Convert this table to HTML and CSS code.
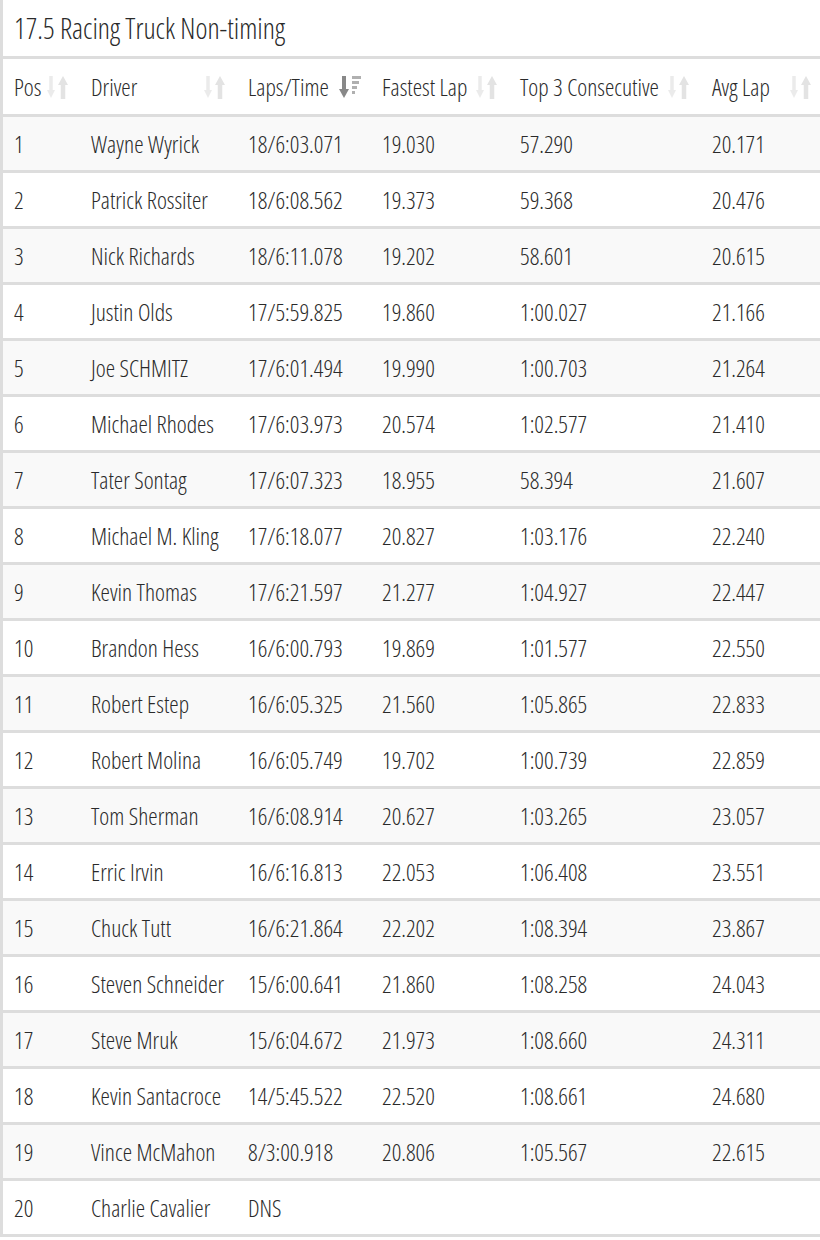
FILE: index.html
```html
<!DOCTYPE html>
<html>
<head>
<meta charset="utf-8">
<link rel="stylesheet" href="styles.css">
</head>
<body>
<div class="panel">
  <div class="panel-title">17.5 Racing Truck Non-timing</div>
  <table class="results">
    <colgroup>
      <col class="c-pos"><col class="c-driver"><col class="c-laps"><col class="c-fast"><col class="c-top3"><col class="c-avg">
    </colgroup>
    <thead>
      <tr>
        <th>Pos<span class="sort"><svg viewBox="0 0 22 24" width="22" height="24"><path class="a1" d="M4 1v16"/><path class="h1" d="M0 15h8l-4 8z"/><path class="a2" d="M16 8v16"/><path class="h2" d="M11 10h10l-5-9z"/></svg></span></th>
        <th>Driver<span class="sort"><svg viewBox="0 0 22 24" width="22" height="24"><path class="a1" d="M4 1v16"/><path class="h1" d="M0 15h8l-4 8z"/><path class="a2" d="M16 8v16"/><path class="h2" d="M11 10h10l-5-9z"/></svg></span></th>
        <th>Laps/Time<span class="sort active"><svg viewBox="0 0 22 24" width="22" height="24"><path class="ad" d="M5 1v16"/><path class="hd" d="M0 14h10l-5 9z"/><rect class="bar" x="13" y="1" width="9" height="3"/><rect class="bar" x="13" y="6" width="7" height="3"/><rect class="bar" x="13" y="11" width="5" height="3"/><rect class="bar" x="13" y="16" width="3" height="3"/></svg></span></th>
        <th>Fastest Lap<span class="sort"><svg viewBox="0 0 22 24" width="22" height="24"><path class="a1" d="M4 1v16"/><path class="h1" d="M0 15h8l-4 8z"/><path class="a2" d="M16 8v16"/><path class="h2" d="M11 10h10l-5-9z"/></svg></span></th>
        <th>Top 3 Consecutive<span class="sort"><svg viewBox="0 0 22 24" width="22" height="24"><path class="a1" d="M4 1v16"/><path class="h1" d="M0 15h8l-4 8z"/><path class="a2" d="M16 8v16"/><path class="h2" d="M11 10h10l-5-9z"/></svg></span></th>
        <th>Avg Lap<span class="sort"><svg viewBox="0 0 22 24" width="22" height="24"><path class="a1" d="M4 1v16"/><path class="h1" d="M0 15h8l-4 8z"/><path class="a2" d="M16 8v16"/><path class="h2" d="M11 10h10l-5-9z"/></svg></span></th>
      </tr>
    </thead>
    <tbody>
      <tr><td>1</td><td>Wayne Wyrick</td><td>18/6:03.071</td><td>19.030</td><td>57.290</td><td>20.171</td></tr>
      <tr><td>2</td><td>Patrick Rossiter</td><td>18/6:08.562</td><td>19.373</td><td>59.368</td><td>20.476</td></tr>
      <tr><td>3</td><td>Nick Richards</td><td>18/6:11.078</td><td>19.202</td><td>58.601</td><td>20.615</td></tr>
      <tr><td>4</td><td>Justin Olds</td><td>17/5:59.825</td><td>19.860</td><td>1:00.027</td><td>21.166</td></tr>
      <tr><td>5</td><td>Joe SCHMITZ</td><td>17/6:01.494</td><td>19.990</td><td>1:00.703</td><td>21.264</td></tr>
      <tr><td>6</td><td>Michael Rhodes</td><td>17/6:03.973</td><td>20.574</td><td>1:02.577</td><td>21.410</td></tr>
      <tr><td>7</td><td>Tater Sontag</td><td>17/6:07.323</td><td>18.955</td><td>58.394</td><td>21.607</td></tr>
      <tr><td>8</td><td>Michael M. Kling</td><td>17/6:18.077</td><td>20.827</td><td>1:03.176</td><td>22.240</td></tr>
      <tr><td>9</td><td>Kevin Thomas</td><td>17/6:21.597</td><td>21.277</td><td>1:04.927</td><td>22.447</td></tr>
      <tr><td>10</td><td>Brandon Hess</td><td>16/6:00.793</td><td>19.869</td><td>1:01.577</td><td>22.550</td></tr>
      <tr><td>11</td><td>Robert Estep</td><td>16/6:05.325</td><td>21.560</td><td>1:05.865</td><td>22.833</td></tr>
      <tr><td>12</td><td>Robert Molina</td><td>16/6:05.749</td><td>19.702</td><td>1:00.739</td><td>22.859</td></tr>
      <tr><td>13</td><td>Tom Sherman</td><td>16/6:08.914</td><td>20.627</td><td>1:03.265</td><td>23.057</td></tr>
      <tr><td>14</td><td>Erric Irvin</td><td>16/6:16.813</td><td>22.053</td><td>1:06.408</td><td>23.551</td></tr>
      <tr><td>15</td><td>Chuck Tutt</td><td>16/6:21.864</td><td>22.202</td><td>1:08.394</td><td>23.867</td></tr>
      <tr><td>16</td><td>Steven Schneider</td><td>15/6:00.641</td><td>21.860</td><td>1:08.258</td><td>24.043</td></tr>
      <tr><td>17</td><td>Steve Mruk</td><td>15/6:04.672</td><td>21.973</td><td>1:08.660</td><td>24.311</td></tr>
      <tr><td>18</td><td>Kevin Santacroce</td><td>14/5:45.522</td><td>22.520</td><td>1:08.661</td><td>24.680</td></tr>
      <tr><td>19</td><td>Vince McMahon</td><td>8/3:00.918</td><td>20.806</td><td>1:05.567</td><td>22.615</td></tr>
      <tr><td>20</td><td>Charlie Cavalier</td><td>DNS</td><td></td><td></td><td></td></tr>
    </tbody>
  </table>
</div>
</body>
</html>
```
FILE: styles.css
```css
html, body {
  margin: 0;
  padding: 0;
  background: #fff;
}
body {
  font-family: "Open Sans", "DejaVu Sans", sans-serif;
  font-stretch: 75%;
  font-weight: 340;
  color: #2a2a2a;
  font-size: 23.7px;
}
.panel {
  border-left: 3px solid #ddd;
  width: 830px;
  overflow: hidden;
}
.panel-title {
  height: 56px;
  line-height: 56px;
  padding-left: 11px;
  font-size: 28.6px;
  font-weight: 340;
}
.results {
  border-collapse: collapse;
  table-layout: fixed;
  width: 820px;
}
.c-pos { width: 77px; }
.c-driver { width: 157px; }
.c-laps { width: 134px; }
.c-fast { width: 138px; }
.c-top3 { width: 192px; }
.c-avg { width: 122px; }
.results th {
  position: relative;
  text-align: left;
  font-weight: 340;
  height: 55px;
  padding: 0 0 0 11px;
  border-top: 3px solid #ddd;
  border-bottom: 3px solid #ddd;
  white-space: nowrap;
}
.results td {
  height: 53px;
  padding: 0 0 0 11px;
  border-bottom: 3px solid #ddd;
  white-space: nowrap;
}
.results tbody tr:nth-child(odd) td {
  background: #f9f9f9;
}
.sort {
  position: absolute;
  right: 11px;
  top: 16px;
  width: 22px;
  height: 24px;
}
.sort svg { display: block; }
.sort .a1 { stroke: #ebebeb; stroke-width: 3.5; fill: none; }
.sort .h1 { fill: #ebebeb; }
.sort .a2 { stroke: #e3e3e3; stroke-width: 4.5; fill: none; }
.sort .h2 { fill: #e3e3e3; }
.sort.active { right: 10px; }
.sort .ad { stroke: #888; stroke-width: 4; fill: none; }
.sort .hd { fill: #888; }
.sort .bar { fill: #b0b0b0; }
```
